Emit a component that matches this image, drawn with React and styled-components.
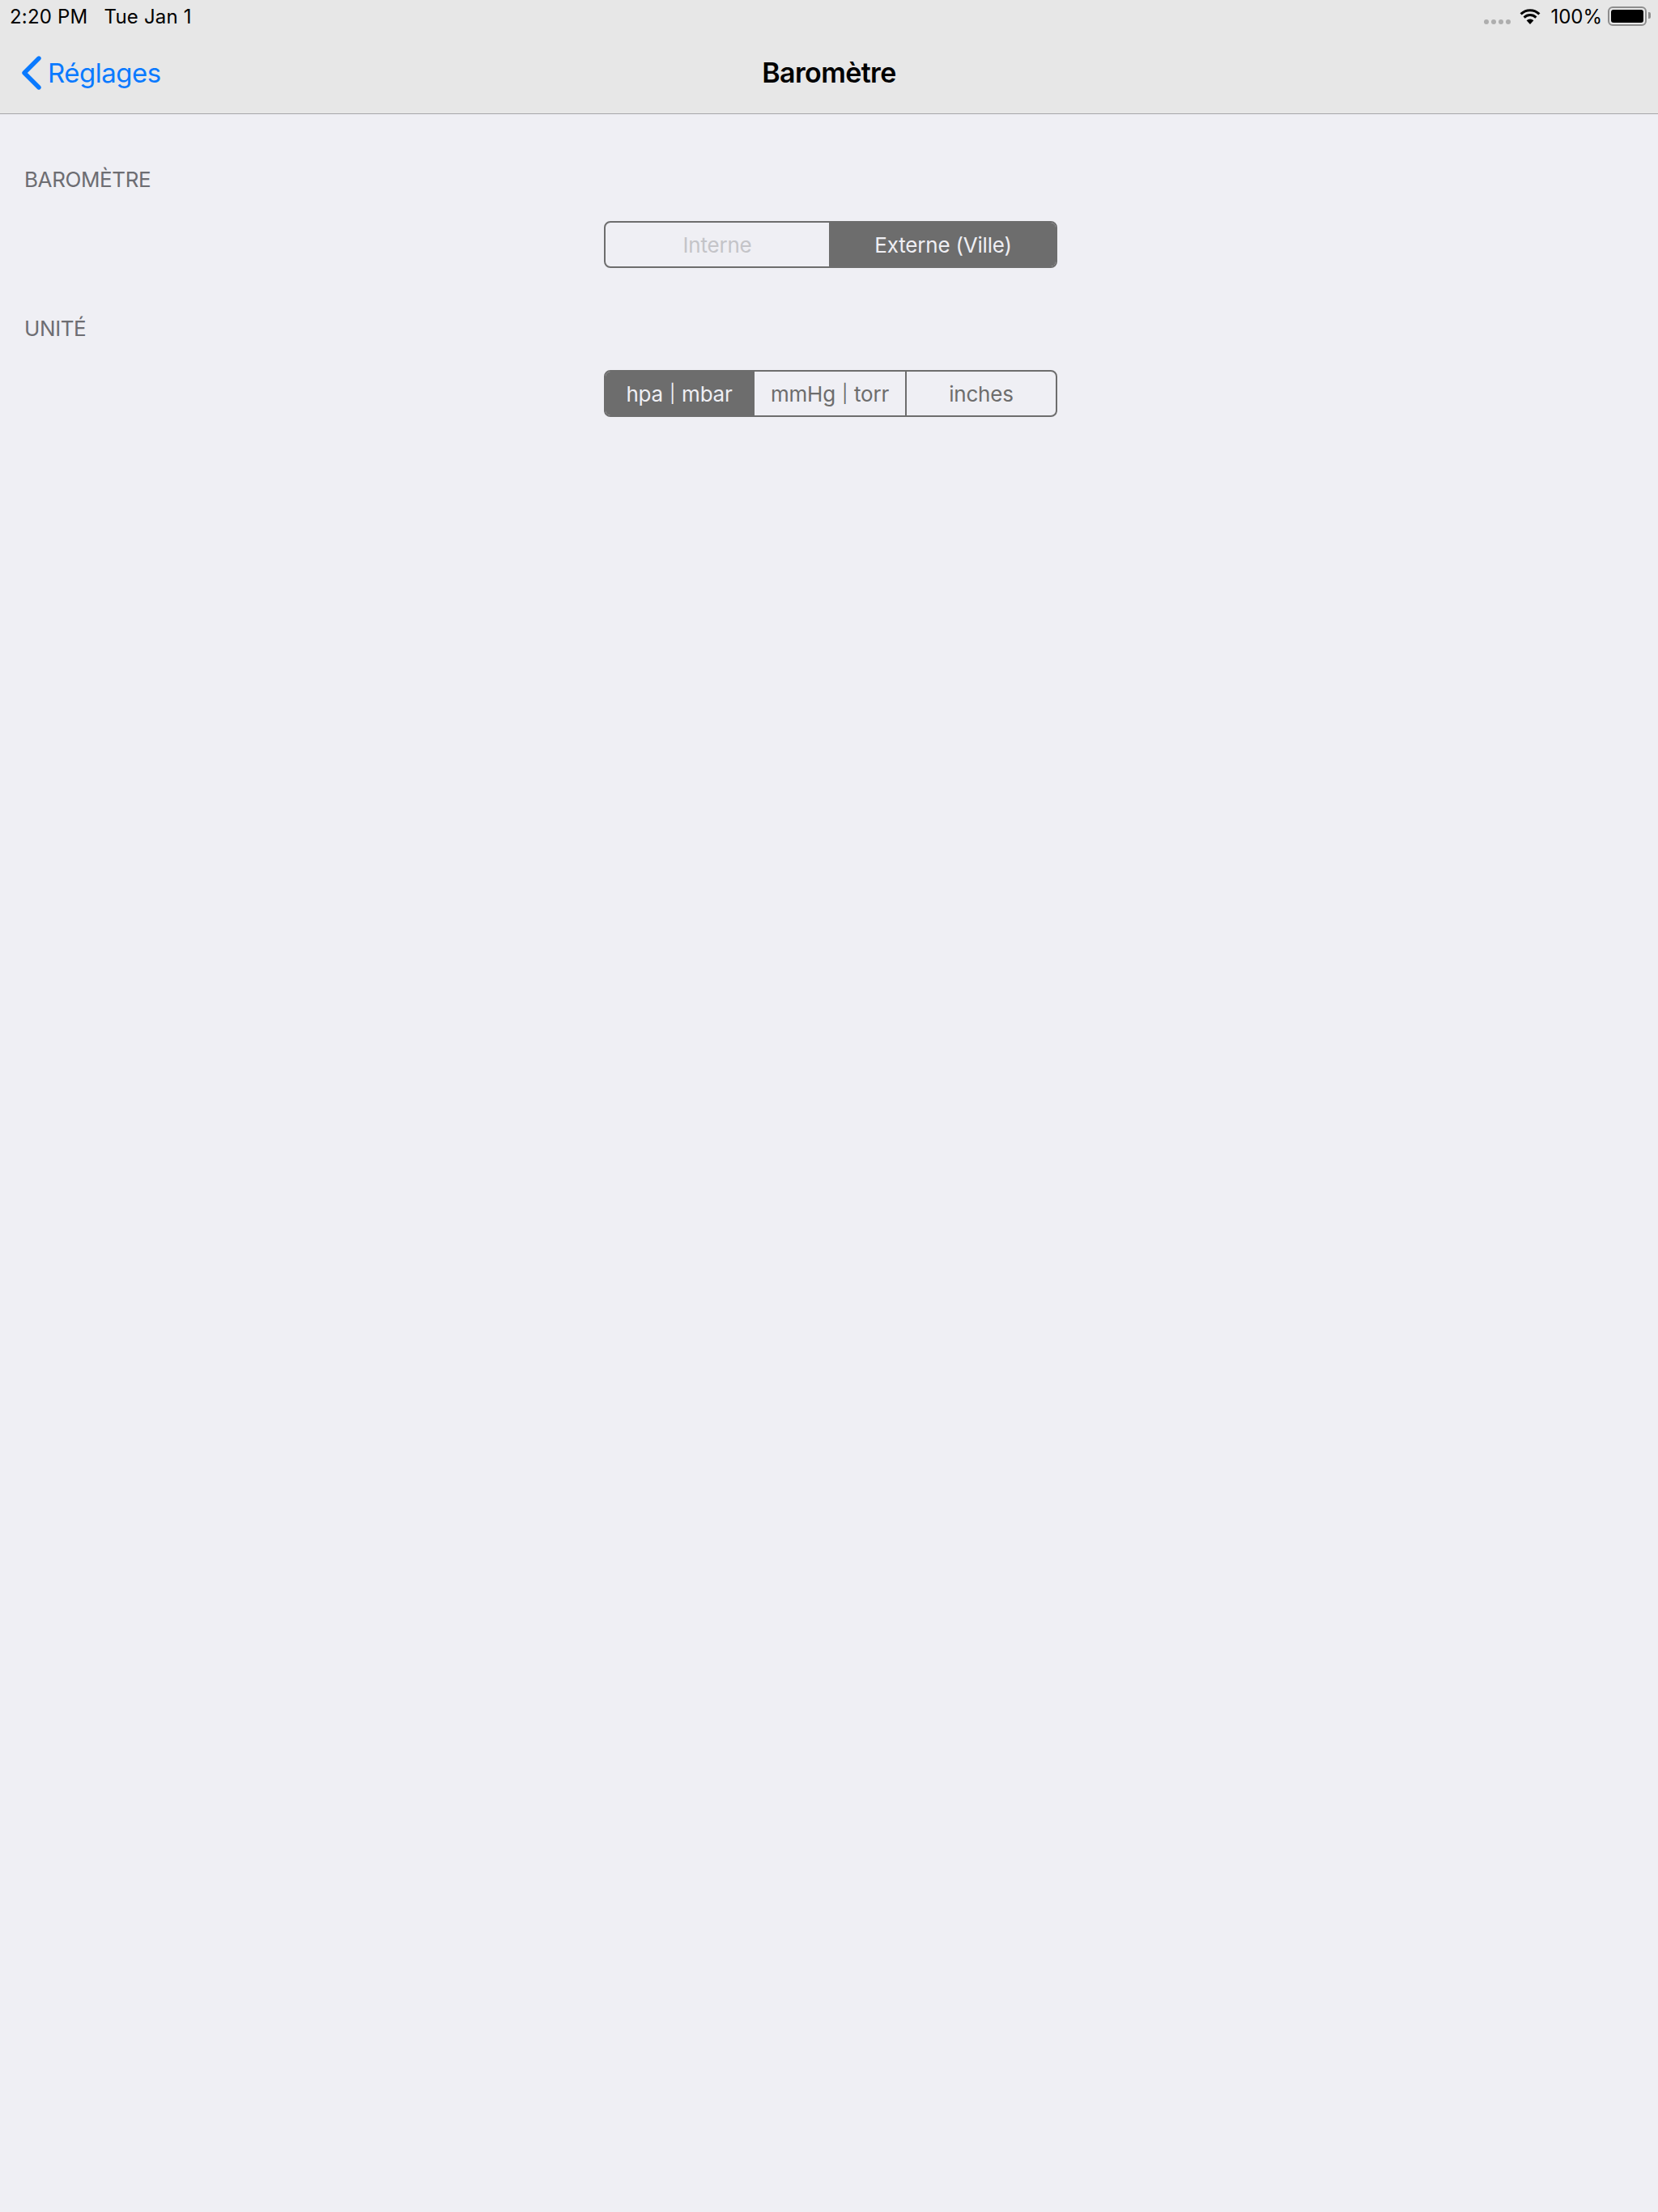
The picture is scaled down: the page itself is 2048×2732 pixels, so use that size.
import React from 'react';
import styled, { createGlobalStyle } from 'styled-components';

const GlobalStyle = createGlobalStyle`
  html, body {
    margin: 0;
    padding: 0;
    background: #efeff4;
  }
  * {
    box-sizing: border-box;
  }
`;

const Page = styled.div`
  width: 2048px;
  height: 2732px;
  background: #efeff4;
  font-family: Inter, "Noto Sans", sans-serif;
  overflow: hidden;
`;

const Header = styled.header`
  height: 141px;
  background: #e7e7e7;
  border-bottom: 1px solid #a7a7aa;
`;

const StatusBar = styled.div`
  height: 40px;
  padding: 0 11px 0 12px;
  display: flex;
  align-items: center;
  justify-content: space-between;
  font-size: 24px;
  color: #000;
  letter-spacing: 0.2px;
`;

const StatusGroup = styled.div`
  display: flex;
  align-items: center;
  gap: ${props => props.$gap || 0}px;
`;

const Signal = styled.div`
  display: flex;
  gap: 3px;
  margin-top: 13px;
  margin-right: 10px;
`;

const Dot = styled.span`
  width: 6px;
  height: 6px;
  border-radius: 50%;
  background: #aeaeae;
`;

const Percent = styled.span`
  margin-left: 11px;
  letter-spacing: 0;
`;

const Battery = styled.div`
  width: 48px;
  height: 24px;
  margin-left: 7px;
  margin-right: 3px;
  padding: 2px;
  border: 2px solid #8d8d8d;
  border-radius: 6px;
  position: relative;

  &::before {
    content: '';
    display: block;
    height: 100%;
    background: #000;
    border-radius: 3px;
  }

  &::after {
    content: '';
    position: absolute;
    right: -7px;
    top: 5px;
    width: 3px;
    height: 8px;
    background: #8d8d8d;
    border-radius: 0 2px 2px 0;
  }
`;

const NavBar = styled.nav`
  height: 100px;
  display: grid;
  grid-template-columns: 1fr auto 1fr;
  align-items: center;
`;

const BackLink = styled.a`
  display: flex;
  align-items: center;
  gap: 7px;
  padding-left: 26px;
  color: #0a7aff;
  font-size: 33px;
  letter-spacing: -0.5px;
`;

const Title = styled.h1`
  margin: 0;
  font-size: 34px;
  line-height: 42px;
  font-weight: 600;
  letter-spacing: -0.6px;
  color: #000;
`;

const Content = styled.main`
  padding-top: 65px;
`;

const Section = styled.section`
  margin-bottom: 59px;
`;

const SectionLabel = styled.h2`
  margin: 0 0 35px;
  padding-left: 30px;
  font-size: 26px;
  line-height: 32px;
  font-weight: 400;
  letter-spacing: -0.4px;
  color: #6d6d72;
  text-transform: uppercase;
`;

const Segmented = styled.div`
  width: 560px;
  height: 58px;
  margin-left: 746px;
  display: flex;
  border: 2px solid #6d6d6d;
  border-radius: 8px;
  overflow: hidden;
`;

const Segment = styled.div`
  flex: ${props => props.$grow} 0 0;
  display: flex;
  align-items: center;
  justify-content: center;
  gap: 8px;
  font-size: 26px;
  letter-spacing: -0.2px;
  background: ${props => (props.$active ? '#6d6d6d' : 'transparent')};
  color: ${props => {
    if (props.$active) return '#efeff4';
    return props.$disabled ? '#c4c4c8' : '#6d6d6d';
  }};

  & + & {
    border-left: 2px solid #6d6d6d;
  }
`;

const Pipe = styled.span`
  font-size: 22px;
`;

function Wifi() {
  return (
    <svg width="28" height="22" viewBox="0 0 28 22" fill="none">
      <path d="M14 21 L9.6 16.2 A6.4 6.4 0 0 1 18.4 16.2 Z" fill="#000" />
      <path d="M6.6 12.6 A10.6 10.6 0 0 1 21.4 12.6" stroke="#000" strokeWidth="3" />
      <path d="M2.6 8.4 A16.2 16.2 0 0 1 25.4 8.4" stroke="#000" strokeWidth="3" />
    </svg>
  );
}

function Chevron() {
  return (
    <svg width="26" height="42" viewBox="0 0 26 42" fill="none">
      <path d="M22 3 L4 21 L22 39" stroke="#0a7aff" strokeWidth="5.4" strokeLinecap="round" strokeLinejoin="round" />
    </svg>
  );
}

const barometre = [
  { label: 'Interne', grow: 276, disabled: true },
  { label: 'Externe (Ville)', grow: 278, active: true },
];

const unite = [
  { label: 'hpa | mbar', grow: 182, active: true },
  { label: 'mmHg | torr', grow: 186 },
  { label: 'inches', grow: 184 },
];

function SegmentLabel({ text }) {
  const parts = text.split(' | ');
  if (parts.length === 1) return <span>{text}</span>;
  return (
    <>
      <span>{parts[0]}</span>
      <Pipe>|</Pipe>
      <span>{parts[1]}</span>
    </>
  );
}

function SegmentRow({ items }) {
  return (
    <Segmented>
      {items.map(item => (
        <Segment key={item.label} $grow={item.grow} $active={item.active} $disabled={item.disabled}>
          <SegmentLabel text={item.label} />
        </Segment>
      ))}
    </Segmented>
  );
}

export default function App() {
  return (
    <Page>
      <GlobalStyle />
      <Header>
        <StatusBar>
          <StatusGroup $gap={20}>
            <span>2:20 PM</span>
            <span>Tue Jan 1</span>
          </StatusGroup>
          <StatusGroup>
            <Signal>
              <Dot />
              <Dot />
              <Dot />
              <Dot />
            </Signal>
            <Wifi />
            <Percent>100%</Percent>
            <Battery />
          </StatusGroup>
        </StatusBar>
        <NavBar>
          <BackLink>
            <Chevron />
            Réglages
          </BackLink>
          <Title>Baromètre</Title>
          <div />
        </NavBar>
      </Header>
      <Content>
        <Section>
          <SectionLabel>Baromètre</SectionLabel>
          <SegmentRow items={barometre} />
        </Section>
        <Section>
          <SectionLabel>Unité</SectionLabel>
          <SegmentRow items={unite} />
        </Section>
      </Content>
    </Page>
  );
}
